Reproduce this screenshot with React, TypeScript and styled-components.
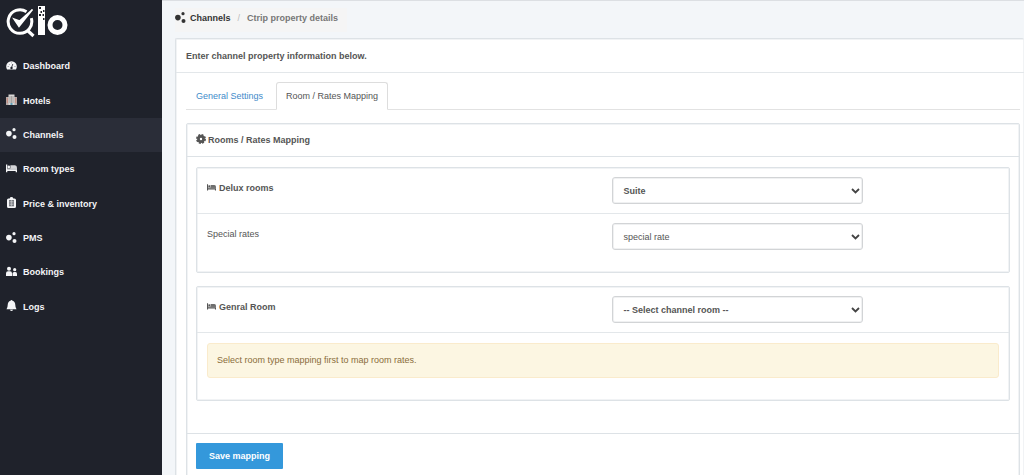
import React from "react";
import styled, { createGlobalStyle, css } from "styled-components";

const Global = createGlobalStyle`
  *, *::before, *::after { box-sizing: border-box; }
  body { margin: 0; background: #f3f6f9; color: #555; font: 9px/14px "Liberation Sans", Arial, sans-serif; }
  #root { display: flow-root; }
  select, button { font-family: inherit; font-size: inherit; }
`;

const Page = styled.div`
  display: flex;
  min-height: 100vh;
`;

const Sidebar = styled.aside`
  flex: 0 0 162px;
  background: #1f222b;
`;

const Brand = styled.a`
  display: block;
  height: 49px;
  padding: 5px 6px;
  svg { display: block; }
`;

const Nav = styled.nav`
  display: grid;
  grid-auto-rows: 1fr;
  height: 275px;
`;

const NavLink = styled.a<{ $active?: boolean }>`
  display: flex;
  align-items: center;
  gap: 6px;
  padding: 0 6px;
  color: #f4f5f7;
  font-weight: bold;
  text-decoration: none;
  background: ${(p) => (p.$active ? "#2a2d38" : "transparent")};
`;

const Glyph = styled.svg`
  flex: none;
  margin-bottom: 2px;
`;

const Main = styled.main`
  flex: 1;
  min-width: 0;
  padding: 7px 0 0 13px;
  border-top: 1px solid #dcdfe3;
`;

const Breadcrumb = styled.nav`
  display: flex;
  width: fit-content;
  align-items: center;
  height: 24px;
  padding: 0 9px 4px 0;
  background: #f5f5f5;
  font-weight: bold;
  color: #777;
  a { display: flex; align-items: center; gap: 4px; color: #333; text-decoration: none; }
  span { padding: 0 7px; color: #bbb; font-weight: normal; }
`;

const panel = css`
  border: 1px solid #dde2e6;
  border-radius: 2px;
  background: #fff;
  box-shadow: inset 0 0 0 1px #f1f3f5;
`;

const Card = styled.section`
  ${panel}
  margin-top: 6px;
  border-right: 0;
`;

const CardTitle = styled.h1`
  display: flex;
  align-items: center;
  height: 34px;
  margin: 0;
  padding: 0 10px;
  border-bottom: 1px solid #e3e7ea;
  font-size: 9px;
`;

const CardBody = styled.div`
  padding: 9px 4px 0 10px;
`;

const Tabs = styled.nav`
  display: flex;
  gap: 3px;
  border-bottom: 1px solid #e2e2e2;
`;

const Tab = styled.a<{ $active?: boolean }>`
  height: 28px;
  margin-bottom: -1px;
  padding: 6px 9px;
  border: 1px solid transparent;
  border-radius: 3px 3px 0 0;
  color: #428bca;
  text-decoration: none;
  ${(p) => p.$active && css`
    border-color: #ddd #ddd #fff;
    background: #fff;
    color: #555;
  `}
`;

const Panel = styled.form`
  ${panel}
  margin-top: 13px;
`;

const PanelTitle = styled.h2`
  display: flex;
  align-items: center;
  gap: 2px;
  height: 33px;
  margin: 0;
  padding: 0 9px;
  border-bottom: 1px solid #dde2e6;
  font-size: 9px;
`;

const Rooms = styled.div`
  display: flex;
  flex-direction: column;
  gap: 13px;
  padding: 10px 9px 32px;
`;

const Room = styled.section`
  ${panel}
`;

const Row = styled.div<{ $heading?: boolean }>`
  display: grid;
  grid-template-columns: 406fr 251fr 136fr;
  align-items: start;
  padding: 9px 10px;
  font-weight: ${(p) => (p.$heading ? "bold" : "normal")};
  border-bottom: ${(p) => (p.$heading ? "1px solid #e3e7ea" : "0")};
  label { display: flex; align-items: center; gap: 3px; padding-top: 4px; }
`;

const RoomBody = styled.div`
  padding-bottom: 13px;
`;

const SelectBox = styled.div`
  position: relative;
  select {
    display: block;
    width: 100%;
    height: 27px;
    padding: 0 20px 0 10px;
    border: 1px solid #d2d4d6;
    border-radius: 3px;
    background: #fff;
    box-shadow: inset 0 0 0 1px #f0f1f2;
    color: #555;
    font-weight: inherit;
    appearance: none;
  }
  svg { position: absolute; top: 11px; right: 3px; pointer-events: none; }
`;

const Notice = styled.p`
  margin: 10px 10px 9px;
  padding: 9px;
  border: 1px solid #faebcc;
  border-radius: 3px;
  background: #fcf6e2;
  color: #8a6d3b;
  line-height: 15px;
`;

const Footer = styled.footer`
  padding: 9px;
  border-top: 1px solid #dde2e6;
`;

const SaveButton = styled.button`
  display: block;
  height: 26px;
  padding: 0 13px;
  border: 0;
  border-radius: 1px;
  background: #3498db;
  color: #fff;
  font-weight: bold;
`;

type IconName = "gauge" | "hotel" | "nodes" | "bed" | "clipboard" | "people" | "bell" | "gear";

const drawings: Record<IconName, React.ReactNode> = {
  gauge: (
    <>
      <path fill="currentColor" d="M.8 9A5.300 5.300 0 1 1 10.200 9Q10 9.500 9.500 9.500h-8Q1 9.500.8 9Z" />
      <path d="M5.500 7.800 6.800 4" stroke="#1f222b" strokeWidth=".8" />
      <circle cx="5.500" cy="8" r="1.200" fill="#1f222b" />
      <path d="M1.700 6.500h.9M2.900 4l.5.5M5.500 2.600v.6M8.600 6.500h.8" stroke="#1f222b" strokeWidth=".6" />
    </>
  ),
  hotel: (
    <>
      <path fill="#b5a9a7" d="M0 3h3v8H0zM8 3h3v8H8z" />
      <path fill="#d9d7d6" d="M2.500 .5h6v10.500h-6z" />
      <path d="M4 2v7M5.500 2v7M7 2v7" stroke="#918d8a" strokeWidth=".7" />
      <path d="M1.300 4v5M9.700 4v5" stroke="#d07a67" strokeWidth=".7" />
      <path fill="#5d9fb8" d="M4.500 9h2v2h-2z" />
    </>
  ),
  nodes: (
    <g fill="currentColor">
      <circle cx="2.900" cy="5.600" r="2.800" />
      <circle cx="8" cy="1.700" r="1.600" />
      <circle cx="8.500" cy="9" r="2" />
    </g>
  ),
  bed: (
    <g fill="currentColor">
      <path d="M0 1.500h1.300v4.800H11v2.900H9.700V8H1.300v1.200H0z" />
      <circle cx="2.800" cy="3.900" r="1.300" />
      <path d="M4.400 2.300H9q2 .2 2 2.600v.9H4.400z" opacity=".85" />
      <path d="M1.300 5.300H11v1H1.300z" opacity=".7" />
    </g>
  ),
  clipboard: (
    <>
      <path fill="currentColor" d="M2.500 1.400h1.200Q4 0 5.500 0t1.800 1.400h1.200Q10 1.400 10 2.900v6.600Q10 11 8.500 11h-6Q1 11 1 9.500V2.900q0-1.500 1.500-1.500z" />
      <path fill="#777a80" d="M3 3h5v6.300H3z" />
      <path d="M3.500 4.500h4M3.500 6h4M3.500 7.500h4M5.500 3v6" stroke="#d5d6d8" strokeWidth=".5" />
    </>
  ),
  people: (
    <g fill="currentColor">
      <circle cx="3" cy="2.700" r="2" />
      <path d="M0 10V7.200Q0 5.200 2 5.200h2q2 0 2 2V10z" />
      <circle cx="8.700" cy="3.700" r="1.600" />
      <path d="M6.600 10V7.600Q6.600 5.900 8 5.900h1.400Q11 5.900 11 7.700V10z" />
    </g>
  ),
  bell: (
    <path fill="currentColor" d="M5.500 0q.9 0 1 .7Q9.200 1.400 9.300 5q0 2.500 1.200 4.300H.5Q1.700 7.500 1.700 5 1.800 1.400 4.500.7 4.600 0 5.500 0ZM4 9.700h3q-.3 1.300-1.500 1.300T4 9.700Z" />
  ),
  gear: (
    <>
      <circle cx="5.500" cy="5.500" r="2.800" stroke="currentColor" strokeWidth="3" />
      <circle cx="5.500" cy="5.500" r="4.500" stroke="currentColor" strokeWidth="1.900" strokeDasharray="2.200 1.334" />
    </>
  ),
};

const Icon = ({ name, size = 11 }: { name: IconName; size?: number }) => (
  <Glyph width={size} height={size} viewBox="0 0 11 11" fill="none" aria-hidden="true">
    {drawings[name]}
  </Glyph>
);

const Logo = () => (
  <svg width="64" height="34" viewBox="0 0 64 34" fill="none" aria-hidden="true">
    <path d="M20.500 6.700A11.800 11.800 0 1 0 25.300 13.200" stroke="#fff" strokeWidth="3" />
    <path d="m21 25 6.500 6" stroke="#fff" strokeWidth="3.200" />
    <path d="m8 14 5 7.500L26.500 4.500 13.500 16Z" fill="#fff" stroke="#fff" strokeWidth="1.500" />
    <path d="M32 1h7v29h-7z" fill="#fff" />
    <path d="M33 2h2v2h-2zM34.500 6h1.500v2h-1.500zM37 5h1.500v2H37zM33 9h2v2h-2zM36.500 9h1.500v2h-1.500zM37 13h1.500v2H37z" fill="#1f222b" />
    <circle cx="51.500" cy="20" r="7.500" stroke="#fff" strokeWidth="5" />
  </svg>
);

const navItems: { icon: IconName; label: string; active?: boolean }[] = [
  { icon: "gauge", label: "Dashboard" },
  { icon: "hotel", label: "Hotels" },
  { icon: "nodes", label: "Channels", active: true },
  { icon: "bed", label: "Room types" },
  { icon: "clipboard", label: "Price & inventory" },
  { icon: "nodes", label: "PMS" },
  { icon: "people", label: "Bookings" },
  { icon: "bell", label: "Logs" },
];

const Select = ({ id, value }: { id: string; value: string }) => (
  <SelectBox>
    <select id={id}><option>{value}</option></select>
    <svg width="9" height="6" viewBox="0 0 9 6" fill="none" aria-hidden="true">
      <path d="m1 1 3.500 3.500L8 1" stroke="#444" strokeWidth="1.800" />
    </svg>
  </SelectBox>
);

export default function App() {
  return (
    <>
      <Global />
      <Page>
        <Sidebar>
          <Brand href="#" aria-label="Qlo"><Logo /></Brand>
          <Nav>
            {navItems.map((item) => (
              <NavLink key={item.label} href="#" $active={item.active}>
                <Icon name={item.icon} />
                {item.label}
              </NavLink>
            ))}
          </Nav>
        </Sidebar>
        <Main>
          <Breadcrumb>
            <a href="#"><Icon name="nodes" />Channels</a>
            <span>/</span>
            Ctrip property details
          </Breadcrumb>
          <Card>
            <CardTitle>Enter channel property information below.</CardTitle>
            <CardBody>
              <Tabs>
                <Tab href="#">General Settings</Tab>
                <Tab href="#" $active>Room / Rates Mapping</Tab>
              </Tabs>
              <Panel>
                <PanelTitle><Icon name="gear" size={10} />Rooms / Rates Mapping</PanelTitle>
                <Rooms>
                  <Room>
                    <Row $heading>
                      <label htmlFor="delux"><Icon name="bed" size={9} />Delux rooms</label>
                      <Select id="delux" value="Suite" />
                    </Row>
                    <RoomBody>
                      <Row>
                        <label htmlFor="special">Special rates</label>
                        <Select id="special" value="special rate" />
                      </Row>
                    </RoomBody>
                  </Room>
                  <Room>
                    <Row $heading>
                      <label htmlFor="genral"><Icon name="bed" size={9} />Genral Room</label>
                      <Select id="genral" value="-- Select channel room --" />
                    </Row>
                    <RoomBody>
                      <Notice>Select room type mapping first to map room rates.</Notice>
                    </RoomBody>
                  </Room>
                </Rooms>
                <Footer><SaveButton type="button">Save mapping</SaveButton></Footer>
              </Panel>
            </CardBody>
          </Card>
        </Main>
      </Page>
    </>
  );
}
